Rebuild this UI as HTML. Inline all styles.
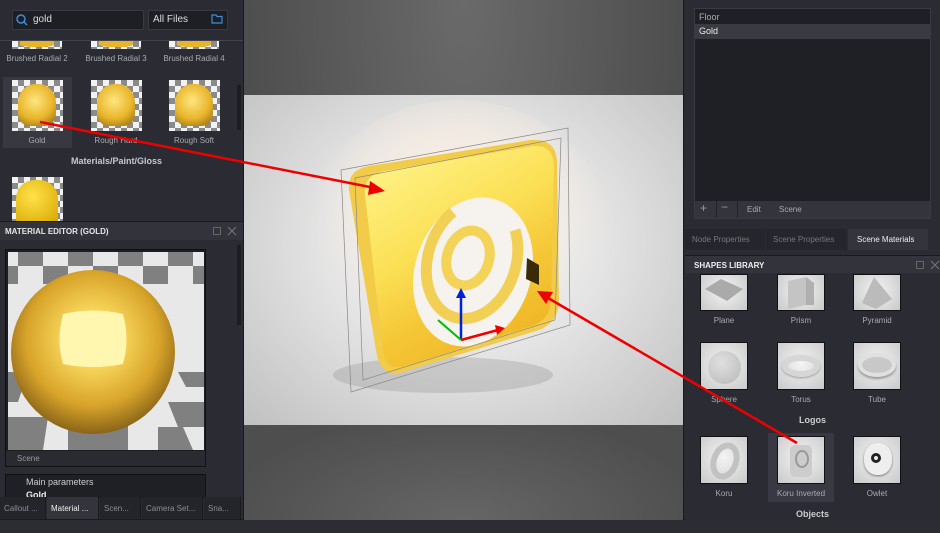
<!DOCTYPE html>
<html><head><meta charset="utf-8"><style>
*{margin:0;padding:0;box-sizing:border-box}
body{width:940px;height:533px;overflow:hidden;background:#2a2b31;font-family:"Liberation Sans",sans-serif;color:#c8c8cc;position:relative}
.a{position:absolute}
.lbl{position:absolute;font-size:8px;color:#a9a9b0;text-align:center;width:80px}
.chk{background:repeating-conic-gradient(#8a8a8a 0 25%,#f2f2f2 0 50%) 0 0/12px 12px}
.gold{background:radial-gradient(circle at 45% 40%,#ffe680,#e8b52a 55%,#8a6410)}
.th{position:absolute;width:48px;height:48px;background:radial-gradient(circle at 50% 45%,#f4f4f4,#c9c9c9);border:1px solid #111}
.tab{position:absolute;top:497px;height:22px;font-size:8px;color:#8c8c94;padding:7px 0 0 4px;background:#24252b;border-right:1px solid #1a1a1e}
</style></head><body>
<div class="a" style="left:0;top:0;width:243px;height:520px;background:#2b2c33"></div>
<div class="a" style="left:12px;top:10px;width:132px;height:20px;background:#1e1f24;border:1px solid #3a3b42;border-radius:2px;font-size:10px;color:#ddd;padding:3px 0 0 20px">gold</div>
<svg class="a" style="left:16px;top:14px" width="12" height="12"><circle cx="5" cy="5" r="4" fill="none" stroke="#3b8ed8" stroke-width="1.5"/><path d="M8 8l3 3" stroke="#3b8ed8" stroke-width="1.5"/></svg>
<div class="a" style="left:148px;top:10px;width:80px;height:20px;background:#1e1f24;border:1px solid #3a3b42;border-radius:2px;font-size:10px;color:#ddd;padding:3px 0 0 4px">All Files</div>
<svg class="a" style="left:211px;top:14px" width="12" height="10"><path d="M1 1h4l1 1.5h5V9H1z" fill="none" stroke="#3b8ed8" stroke-width="1.2"/></svg>
<div class="a" style="left:0;top:40px;width:243px;height:1px;background:#44454c"></div>
<div class="a chk" style="left:12px;top:41px;width:50px;height:8px"><div class="a" style="left:8px;top:0;width:34px;height:6px;background:#e8b52a;border-radius:0 0 40% 40%"></div></div>
<div class="a chk" style="left:91px;top:41px;width:50px;height:8px"><div class="a" style="left:8px;top:0;width:34px;height:6px;background:#e8b52a;border-radius:0 0 40% 40%"></div></div>
<div class="a chk" style="left:169px;top:41px;width:50px;height:8px"><div class="a" style="left:8px;top:0;width:34px;height:6px;background:#e8b52a;border-radius:0 0 40% 40%"></div></div>
<div class="lbl" style="left:-3px;top:54px">Brushed Radial 2</div>
<div class="lbl" style="left:76px;top:54px">Brushed Radial 3</div>
<div class="lbl" style="left:154px;top:54px">Brushed Radial 4</div>
<div class="a" style="left:3px;top:77px;width:69px;height:71px;background:#373840"></div>
<div class="a chk" style="left:12px;top:80px;width:51px;height:51px"><div class="a gold" style="left:6px;top:4px;width:38px;height:42px;border-radius:45% 45% 30% 30%"></div></div>
<div class="a chk" style="left:91px;top:80px;width:51px;height:51px"><div class="a gold" style="left:6px;top:4px;width:38px;height:42px;border-radius:45% 45% 30% 30%"></div></div>
<div class="a chk" style="left:169px;top:80px;width:51px;height:51px"><div class="a gold" style="left:6px;top:4px;width:38px;height:42px;border-radius:45% 45% 30% 30%"></div></div>
<div class="lbl" style="left:-3px;top:136px">Gold</div>
<div class="lbl" style="left:76px;top:136px">Rough Hard</div>
<div class="lbl" style="left:154px;top:136px">Rough Soft</div>
<div class="a" style="left:0;top:156px;width:233px;text-align:center;font-size:9px;font-weight:bold;color:#c8c8cc">Materials/Paint/Gloss</div>
<div class="a chk" style="left:12px;top:177px;width:51px;height:44px"><div class="a" style="left:4px;top:3px;width:42px;height:41px;border-radius:45% 45% 0 0;background:radial-gradient(circle at 40% 40%,#ffe24a,#d9a800)"></div></div>
<div class="a" style="left:237px;top:85px;width:4px;height:45px;background:#1c1d22"></div>
<div class="a" style="left:0;top:221px;width:243px;height:1px;background:#1a1a1e"></div>
<div class="a" style="left:0;top:222px;width:243px;height:18px;background:#33343b;font-size:8px;font-weight:bold;color:#e6e6e6;padding:5px 0 0 5px">MATERIAL EDITOR (GOLD)</div>
<div class="a" style="left:213px;top:227px;width:8px;height:8px;border:1px solid #666"></div>
<svg class="a" style="left:227px;top:226px" width="10" height="10"><path d="M1 1l8 8M9 1l-8 8" stroke="#777"/></svg>
<div class="a" style="left:237px;top:245px;width:4px;height:80px;background:#1c1d22"></div>
<div class="a" style="left:5px;top:249px;width:201px;height:218px;background:#1c1d22;border:1px solid #111"></div>
<div class="a" style="left:8px;top:252px;width:196px;height:198px;overflow:hidden">
<svg width="196" height="198"><defs><radialGradient id="g1" cx="50%" cy="42%" r="58%"><stop offset="0" stop-color="#fffbd0"/><stop offset=".3" stop-color="#f7d65a"/><stop offset=".7" stop-color="#d8a42a"/><stop offset="1" stop-color="#8a6418"/></radialGradient></defs>
<rect width="196" height="198" fill="#e8e8e8"/>
<g fill="#808080"><rect x="10" y="0" width="25" height="14"/><rect x="60" y="0" width="25" height="14"/><rect x="110" y="0" width="25" height="14"/><rect x="160" y="0" width="25" height="14"/>
<rect x="0" y="14" width="10" height="18"/><rect x="35" y="14" width="25" height="18"/><rect x="85" y="14" width="25" height="18"/><rect x="135" y="14" width="25" height="18"/><rect x="185" y="14" width="11" height="18"/>
<polygon points="0,120 20,120 10,150 0,150"/><polygon points="0,165 40,165 35,198 0,198"/><polygon points="60,165 120,165 120,198 60,198"/><polygon points="160,150 196,150 196,175 170,175"/><polygon points="150,175 175,175 185,198 150,198"/><polygon points="170,120 196,120 196,135 178,135"/></g>
<circle cx="85" cy="100" r="82" fill="url(#g1)"/>
<path d="M55 62 Q85 55 115 62 Q122 88 115 112 Q85 118 55 112 Q48 88 55 62Z" fill="#fff6b0"/>
</svg></div>
<div class="a" style="left:6px;top:451px;width:199px;height:15px;background:#2a2b31;font-size:8px;color:#999;padding:3px 0 0 11px">Scene</div>
<div class="a" style="left:5px;top:474px;width:201px;height:24px;background:#1f2025;border:1px solid #111"></div>
<div class="a" style="left:26px;top:477px;font-size:9px;color:#ccc">Main parameters</div>
<div class="a" style="left:26px;top:490px;font-size:9px;font-weight:bold;color:#eee">Gold</div>
<div class="tab" style="left:0;width:46px">Callout ...</div>
<div class="tab" style="left:47px;width:52px;background:#34353c;color:#eee">Material ...</div>
<div class="tab" style="left:100px;width:41px">Scen...</div>
<div class="tab" style="left:142px;width:61px">Camera Set...</div>
<div class="tab" style="left:204px;width:37px">Sna...</div>
<div class="a" style="left:0;top:519px;width:940px;height:14px;background:#2c2d33;border-top:1px solid #1a1a1e"></div>
<div class="a" style="left:243px;top:0;width:441px;height:520px;background:radial-gradient(ellipse at 50% 0%,#6a6a6a,#4a4a4a 80%);border-left:1px solid #1a1a1e;border-right:1px solid #1a1a1e"></div>
<div class="a" style="left:244px;top:95px;width:439px;height:330px;background:radial-gradient(ellipse at 50% 45%,#fafafa,#e4e4e4 45%,#c0c0c0)"></div>
<div class="a" style="left:244px;top:425px;width:439px;height:95px;background:radial-gradient(ellipse at 50% 100%,#666,#4e4e4e 80%)"></div>
<svg class="a" style="left:243px;top:0" width="441" height="520">
<defs><linearGradient id="gg" x1="0" y1="0" x2="0.5" y2="1"><stop offset="0" stop-color="#fff690"/><stop offset=".5" stop-color="#fbe055"/><stop offset=".75" stop-color="#f5c838"/><stop offset="1" stop-color="#f0b828"/></linearGradient>
<radialGradient id="glow" cx="50%" cy="40%" r="50%"><stop offset="0" stop-color="#fff0e0"/><stop offset="1" stop-color="#fff0e0" stop-opacity="0"/></radialGradient></defs>
<ellipse cx="215" cy="230" rx="150" ry="130" fill="url(#glow)"/>
<ellipse cx="200" cy="375" rx="110" ry="18" fill="#999" opacity=".35"/>
<path d="M106 190 Q104 170 126 166 L288 140 Q312 138 314 160 L316 300 Q316 322 296 330 L160 372 Q140 378 134 356 Z" fill="#f2cc48"/>
<path d="M122 195 Q120 175 142 171 L290 146 Q310 144 311 166 L308 300 Q307 320 289 326 L162 366 Q142 372 140 350 Z" fill="url(#gg)"/>
<ellipse cx="230" cy="272" rx="58" ry="76" transform="rotate(18 230 272)" fill="#f6f3ee"/>
<path d="M272 230 A44 60 18 1 1 210 212" fill="none" stroke="#f2d055" stroke-width="11"/>
<ellipse cx="225" cy="258" rx="21" ry="28" transform="rotate(18 225 258)" fill="none" stroke="#f4d458" stroke-width="10"/>
<path d="M284 258 l12 7 v20 l-13 -6z" fill="#3a2a08"/>
<g fill="none" stroke="#888" stroke-width=".7"><path d="M98 170 L325 128 L327 325 L108 392 Z"/><path d="M112 178 L318 138 L312 320 L120 380Z"/></g>
<path d="M218 340 V295" stroke="#0022dd" stroke-width="2.5"/><path d="M213 298 l5 -10 5 10z" fill="#0022dd"/>
<path d="M218 340 L255 330" stroke="#e00" stroke-width="2.5"/><path d="M252 325 l10 3 -8 7z" fill="#e00"/>
<path d="M218 340 L195 320" stroke="#0b0" stroke-width="2"/>
</svg>
<div class="a" style="left:685px;top:0;width:255px;height:520px;background:#2b2c33"></div>
<div class="a" style="left:694px;top:8px;width:237px;height:211px;background:#1f2025;border:1px solid #3a3b42"></div>
<div class="a" style="left:699px;top:12px;font-size:9px;color:#aaa">Floor</div>
<div class="a" style="left:695px;top:24px;width:235px;height:15px;background:#393a42"></div>
<div class="a" style="left:699px;top:26px;font-size:9px;color:#eee">Gold</div>
<div class="a" style="left:695px;top:201px;width:235px;height:17px;background:#34353c"></div>
<div class="a" style="left:700px;top:201px;font-size:12px;color:#999">+</div>
<div class="a" style="left:716px;top:201px;width:1px;height:17px;background:#22232a"></div>
<div class="a" style="left:721px;top:200px;font-size:12px;color:#999">−</div>
<div class="a" style="left:737px;top:201px;width:1px;height:17px;background:#22232a"></div>
<div class="a" style="left:747px;top:205px;font-size:8px;color:#aaa">Edit</div>
<div class="a" style="left:779px;top:205px;font-size:8px;color:#aaa">Scene</div>
<div class="a" style="left:685px;top:229px;width:80px;height:21px;background:#25262c;font-size:8px;color:#777;padding:6px 0 0 7px">Node Properties</div>
<div class="a" style="left:766px;top:229px;width:81px;height:21px;background:#25262c;font-size:8px;color:#777;padding:6px 0 0 7px">Scene Properties</div>
<div class="a" style="left:848px;top:229px;width:80px;height:21px;background:#34353c;font-size:8px;color:#eee;padding:6px 0 0 9px">Scene Materials</div>
<div class="a" style="left:685px;top:255px;width:255px;height:18px;background:#33343b;border-top:1px solid #1a1a1e;font-size:8px;font-weight:bold;color:#eee;padding:5px 0 0 9px">SHAPES LIBRARY</div>
<div class="a" style="left:916px;top:261px;width:8px;height:8px;border:1px solid #666"></div>
<svg class="a" style="left:930px;top:260px" width="10" height="10"><path d="M1 1l8 8M9 1l-8 8" stroke="#777"/></svg>
<div class="th" style="left:700px;top:274px;height:37px"><svg width="46" height="35"><path d="M4 14 L20 4 L42 14 L26 26Z" fill="#aaa"/></svg></div>
<div class="th" style="left:777px;top:274px;height:37px"><svg width="46" height="35"><path d="M10 6 L28 2 L28 30 L10 34Z" fill="#c4c4c4"/><path d="M28 2 L36 8 L36 30 L28 30Z" fill="#b0b0b0"/></svg></div>
<div class="th" style="left:853px;top:274px;height:37px"><svg width="46" height="35"><path d="M20 2 L8 28 L22 34 L38 24Z" fill="#bbb"/></svg></div>
<div class="lbl" style="left:684px;top:316px">Plane</div>
<div class="lbl" style="left:761px;top:316px">Prism</div>
<div class="lbl" style="left:837px;top:316px">Pyramid</div>
<div class="th" style="left:700px;top:342px"><div class="a" style="left:7px;top:8px;width:33px;height:33px;border-radius:50%;background:radial-gradient(circle at 40% 35%,#e0e0e0,#b8b8b8)"></div></div>
<div class="th" style="left:777px;top:342px"><div class="a" style="left:4px;top:12px;width:38px;height:22px;border-radius:50%;border:6px solid #d6d6d6;box-shadow:0 1px 2px #999"></div></div>
<div class="th" style="left:853px;top:342px"><div class="a" style="left:4px;top:10px;width:38px;height:24px;border-radius:50%;border:4px solid #e0e0e0;box-shadow:0 2px 2px #999;background:#c8c8c8"></div></div>
<div class="lbl" style="left:684px;top:395px">Sphere</div>
<div class="lbl" style="left:761px;top:395px">Torus</div>
<div class="lbl" style="left:837px;top:395px">Tube</div>
<div class="a" style="left:685px;top:415px;width:255px;text-align:center;font-size:9px;font-weight:bold;color:#ccc">Logos</div>
<div class="a" style="left:768px;top:433px;width:66px;height:69px;background:#383942"></div>
<div class="th" style="left:700px;top:436px"><svg width="46" height="46"><ellipse cx="24" cy="24" rx="11" ry="16" transform="rotate(20 24 24)" fill="none" stroke="#c2c2c2" stroke-width="6"/></svg></div>
<div class="th" style="left:777px;top:436px"><svg width="46" height="46"><rect x="12" y="8" width="22" height="32" rx="5" fill="#ccc"/><ellipse cx="24" cy="22" rx="6" ry="8" fill="none" stroke="#999" stroke-width="2"/></svg></div>
<div class="th" style="left:853px;top:436px"><div class="a" style="left:10px;top:6px;width:28px;height:32px;border-radius:45%;background:#eee;box-shadow:0 1px 2px #777"></div><div class="a" style="left:17px;top:16px;width:10px;height:10px;border-radius:50%;border:3px solid #222"></div></div>
<div class="lbl" style="left:684px;top:489px">Koru</div>
<div class="lbl" style="left:761px;top:489px">Koru Inverted</div>
<div class="lbl" style="left:837px;top:489px">Owlet</div>
<div class="a" style="left:685px;top:509px;width:255px;text-align:center;font-size:9px;font-weight:bold;color:#ccc">Objects</div>
<svg class="a" style="left:0;top:0" width="940" height="533">
<path d="M40 122 L375 188" stroke="#e00" stroke-width="2.5"/><path d="M385 191 L370 181 L368 195Z" fill="#e00"/>
<path d="M797 443 L548 298" stroke="#e00" stroke-width="2.5"/><path d="M537 291 L553 292 L546 304Z" fill="#e00"/>
</svg>
</body></html>
